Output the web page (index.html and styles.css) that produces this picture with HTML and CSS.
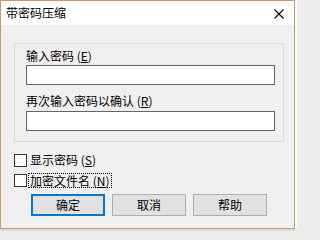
FILE: index.html
```html
<!DOCTYPE html>
<html lang="zh-CN">
<head>
<meta charset="utf-8">
<title>带密码压缩</title>
<link rel="stylesheet" href="styles.css">
</head>
<body>
<div class="desk">
  <div class="window">
    <div class="titlebar">
      <span class="title">带密码压缩</span>
      <span class="close">
        <svg width="10" height="10" viewBox="0 0 10 10"><path d="M0.5 0.5 L9.5 9.5 M9.5 0.5 L0.5 9.5" stroke="#000" stroke-width="1.1" fill="none"/></svg>
      </span>
    </div>
    <div class="content">
      <div class="group">
        <div class="label">输入密码 (<u>E</u>)</div>
        <div class="input"></div>
        <div class="label second">再次输入密码以确认 (<u>R</u>)</div>
        <div class="input"></div>
      </div>
      <div class="check first">
        <span class="box"></span>
        <span class="ctext">显示密码 (<u>S</u>)</span>
      </div>
      <div class="check focus-row">
        <span class="box"></span>
        <span class="ctext focus">加密文件名 (<u>N</u>)</span>
      </div>
      <div class="buttons">
        <div class="btn default">确定</div>
        <div class="btn">取消</div>
        <div class="btn">帮助</div>
      </div>
    </div>
  </div>
</div>
</body>
</html>
```

FILE: styles.css
```css
* { box-sizing: border-box; }
html, body {
  margin: 0;
  padding: 0;
  background: #ececec;
  width: 297px;
  height: 231px;
  overflow: hidden;
  font-family: "Noto Sans CJK SC", "Noto Sans", sans-serif;
  font-size: 12px;
  color: #000;
}
.desk {
  width: 297px;
  height: 231px;
  background: linear-gradient(to bottom, #ffffff 0, #ffffff 229px, #dcdcdc 229px);
}
.window {
  width: 295px;
  height: 229px;
  border: 1px solid #c8976a;
  background: #f0f0f0;
  display: flex;
  flex-direction: column;
}
.titlebar {
  height: 24px;
  background: #fff;
  display: flex;
  align-items: center;
  justify-content: space-between;
  padding: 0 10px 0 5px;
  flex: none;
}
.title {
  line-height: 16px;
  margin-top: -1px;
}
.close {
  display: flex;
  width: 10px;
  height: 10px;
  margin-top: 1px;
}
.content {
  flex: 1;
  padding: 18px 0 0 13px;
  display: flex;
  flex-direction: column;
}
.group {
  width: 270px;
  height: 99px;
  border: 1px solid #dcdcdc;
  padding: 4px 0 0 11px;
}
.label {
  line-height: 16px;
  height: 16px;
  white-space: nowrap;
}
.label u { text-decoration-thickness: 1px; }
.label.second { margin-top: 8px; }
.input {
  width: 249px;
  height: 20px;
  margin-top: 1px;
  background: #fff;
  border: 1px solid #646464;
}
.label.second + .input { margin-top: 2px; }
.check {
  display: flex;
  align-items: center;
  height: 14px;
}
.check.first { margin-top: 11px; }
.check.focus-row { margin-top: 6px; height: 15px; }
.box {
  width: 13px;
  height: 13px;
  border: 1px solid #333;
  background: #fff;
  flex: none;
}
.ctext {
  margin-left: 3px;
  line-height: 14px;
  white-space: nowrap;
}
.ctext.focus {
  margin-left: 1px;
  padding: 0 1px;
  border: 1px dotted #000;
  line-height: 13px;
}
.buttons {
  display: flex;
  gap: 7px;
  margin: 6px 0 0 17px;
}
.btn {
  width: 74px;
  height: 22px;
  border: 1px solid #adadad;
  background: #e1e1e1;
  display: flex;
  align-items: center;
  justify-content: center;
  line-height: 16px;
}
.btn.default {
  border: 2px solid #0078d7;
}
```
